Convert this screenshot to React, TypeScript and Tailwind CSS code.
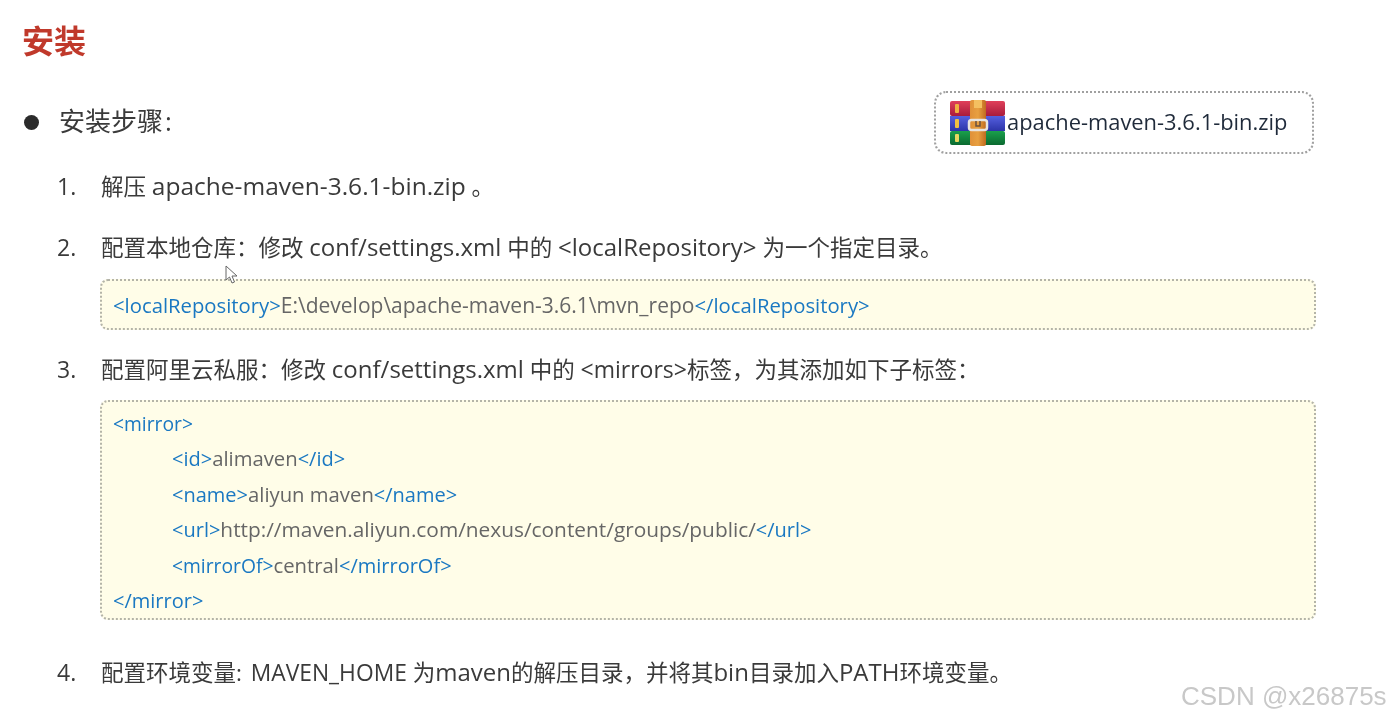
const Tag = ({ children }: { children: React.ReactNode }) => (
  <span className="text-[20px] text-[#1a78c2]">{children}</span>
);

// the mirror tags run a bit narrower than the other tags
const NarrowTag = ({ children }: { children: React.ReactNode }) => (
  <span className="text-[19.3px] text-[#1a78c2]">{children}</span>
);

const BoxTag = ({ children }: { children: React.ReactNode }) => (
  <span className="text-[20.3px] text-[#1a78c2]">{children}</span>
);

// latin runs sit a little larger than the CJK text in the slide
const L = ({ children }: { children: React.ReactNode }) => (
  <span className="text-[24px]">{children}</span>
);

const ZipIcon = () => (
  <svg width="55" height="46" viewBox="0 0 55 46" className="shrink-0">
    <defs>
      <linearGradient id="red" x1="0" y1="0" x2="0" y2="1">
        <stop offset="0" stopColor="#e0405a" />
        <stop offset="1" stopColor="#a81c3c" />
      </linearGradient>
      <linearGradient id="blue" x1="0" y1="0" x2="0" y2="1">
        <stop offset="0" stopColor="#5560e0" />
        <stop offset="1" stopColor="#2c34a8" />
      </linearGradient>
      <linearGradient id="green" x1="0" y1="0" x2="0" y2="1">
        <stop offset="0" stopColor="#1aa04c" />
        <stop offset="1" stopColor="#0b6a30" />
      </linearGradient>
      <linearGradient id="strap" x1="0" y1="0" x2="1" y2="0">
        <stop offset="0" stopColor="#e09038" />
        <stop offset="0.5" stopColor="#e8a040" />
        <stop offset="1" stopColor="#c06a20" />
      </linearGradient>
    </defs>
    <rect x="0" y="1" width="55" height="15" rx="2" fill="url(#red)" />
    <rect x="0" y="16" width="55" height="15" fill="url(#blue)" />
    <rect x="0" y="31" width="55" height="14" rx="2" fill="url(#green)" />
    <rect x="5" y="4" width="4" height="9" rx="1" fill="#f0b040" />
    <rect x="5" y="19" width="4" height="9" rx="1" fill="#f0c040" />
    <rect x="5" y="34" width="4" height="8" rx="1" fill="#e8d860" />
    <rect x="20" y="0" width="16" height="46" rx="2" fill="url(#strap)" />
    <rect x="24" y="0" width="8" height="8" fill="#f4c060" />
    <rect x="19" y="20" width="18" height="10" rx="2.5" fill="none" stroke="#e8e4e0" strokeWidth="2.5" />
    <path d="M26 21 V26 H30 V21" fill="none" stroke="#6a5040" strokeWidth="1.5" />
  </svg>
);

const Step = ({ no, children }: { no: string; children: React.ReactNode }) => (
  <div className="flex items-baseline h-[30px] leading-[30px] text-[#3a3a3a] text-[22.5px] whitespace-pre">
    <span className="w-[44px] shrink-0 text-[23px]">{no}</span>
    <span>{children}</span>
  </div>
);

export default function App() {
  return (
    <div
      className="relative w-[1390px] h-[719px] overflow-hidden bg-white pl-[22px] pt-[20px] blur-[0.4px]"
      style={{ fontFamily: '"Open Sans", "Noto Sans CJK SC", sans-serif' }}
    >
      <h1 className="h-[42px] leading-[42px] text-[32px] font-semibold text-[#c0392b]">安装</h1>

      <div className="flex items-center justify-between mt-[29px] w-[1292px] h-[63px]">
        <div className="flex items-center text-[26px] leading-[36px] text-[#3a3a3a] -mt-[3px]">
          <span className="w-[15px] h-[15px] ml-[2px] rounded-full bg-[#2b2b2b] mr-[20px] mt-[3px]" />
          安装步骤<span className="ml-[2px]">:</span>
        </div>
        <div className="flex items-center w-[380px] h-[63px] pl-[14px] rounded-[12px] border-2 border-dotted border-[#a0a0a0] text-[21.9px] text-[#1f2a3a]">
          <ZipIcon />
          <span className="ml-[2px]">apache-maven-3.6.1-bin.zip</span>
        </div>
      </div>

      <div className="pl-[35px] mt-[17px]">
        <Step no="1.">解压 <span className="text-[24.5px]">apache-maven-3.6.1-bin.zip</span> 。</Step>
      </div>
      <div className="pl-[35px] mt-[31px]">
        <Step no="2.">配置本地仓库：修改 <L>conf/settings.xml</L> 中的 <L>&lt;localRepository&gt;</L> 为一个指定目录。</Step>
      </div>

      <div className="ml-[78px] mt-[17px] w-[1216px] h-[51px] pl-[11px] pt-[2px] flex items-center rounded-[8px] border-2 border-dotted border-[#b4b4a8] bg-[#fffde8] text-[21px] text-[#666]">
        <BoxTag>&lt;localRepository&gt;</BoxTag>E:\develop\apache-maven-3.6.1\mvn_repo<BoxTag>&lt;/localRepository&gt;</BoxTag>
      </div>

      <div className="pl-[35px] mt-[24px]">
        <Step no="3.">配置阿里云私服：修改 <L>conf/settings.xml</L> 中的 <span className="text-[23px]">&lt;mirrors&gt;</span>标签，为其添加如下子标签：</Step>
      </div>

      <div className="ml-[78px] mt-[16px] w-[1216px] h-[220px] pl-[11px] pt-[4px] rounded-[8px] border-2 border-dotted border-[#b4b4a8] bg-[#fffde8] text-[20.3px] leading-[35.4px] text-[#666]">
        <div><NarrowTag>&lt;mirror&gt;</NarrowTag></div>
        <div className="pl-[59px]"><Tag>&lt;id&gt;</Tag>alimaven<Tag>&lt;/id&gt;</Tag></div>
        <div className="pl-[59px]"><Tag>&lt;name&gt;</Tag>aliyun maven<Tag>&lt;/name&gt;</Tag></div>
        <div className="pl-[59px]"><Tag>&lt;url&gt;</Tag><span className="text-[20.85px]">http://maven.aliyun.com/nexus/content/groups/public/</span><Tag>&lt;/url&gt;</Tag></div>
        <div className="pl-[59px]"><NarrowTag>&lt;mirrorOf&gt;</NarrowTag>central<Tag>&lt;/mirrorOf&gt;</Tag></div>
        <div><Tag>&lt;/mirror&gt;</Tag></div>
      </div>

      <div className="pl-[35px] mt-[37px]">
        <Step no="4.">配置环境变量: <span className="ml-[3px] text-[22.8px]">MAVEN_HOME</span> 为<L>maven</L>的解压目录，并将其<L>bin</L>目录加入<L>PATH</L>环境变量。</Step>
      </div>

      {/* mouse cursor */}
      <svg width="14" height="20" viewBox="0 0 14 20" className="absolute left-[225px] top-[265px]">
        <path d="M1 1 L1 15 L4.5 12 L7 18 L9.5 17 L7 11 L12 11 Z" fill="#fff" stroke="#666" strokeWidth="1" />
      </svg>

      <div
        className="absolute left-[1181px] top-[681px] text-[26px] leading-[30px] text-[#c8c8c8]"
        style={{ fontFamily: '"Liberation Sans", sans-serif' }}
      >
        CSDN @x26875s
      </div>
    </div>
  );
}
